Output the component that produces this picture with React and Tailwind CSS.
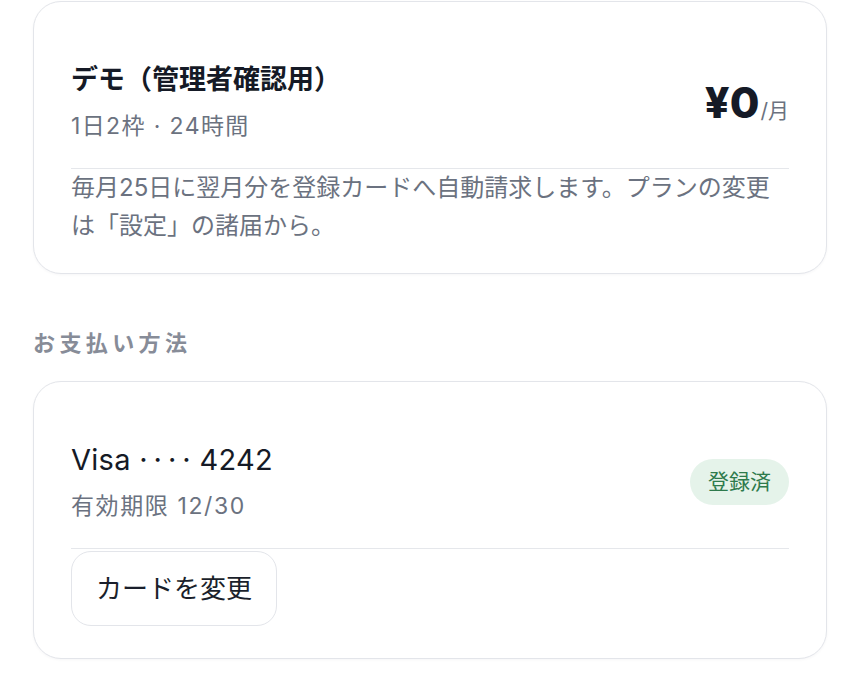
import React from "react";

const font = { fontFamily: 'Inter, "Noto Sans CJK JP", "Noto Sans", sans-serif' };

export default function App() {
  return (
    <div
      className="w-[860px] h-[680px] bg-white px-[33px] pt-px overflow-hidden text-[#111827]"
      style={font}
    >
      {/* Plan card */}
      <div className="rounded-[28px] border border-[#e3e5ea] bg-white px-[37px] pt-[61px] pb-[28px] shadow-[0_1px_3px_rgba(16,24,40,0.04)]">
        <div className="flex items-center justify-between">
          <div className="flex flex-col">
            <div className="text-[27px] leading-[34px] font-bold text-[#151a26]">
              デモ（管理者確認用）
            </div>
            <div className="mt-[14px] text-[23px] leading-[30px] tracking-[0.06em] text-[#6b7280]">
              1日2枠 · 24時間
            </div>
          </div>
          <div className="flex items-baseline">
            <span className="text-[43px] leading-none font-extrabold text-[#151a26]">¥0</span>
            <span className="ml-px text-[21px] leading-none text-[#6b7280]">/月</span>
          </div>
        </div>
        <div className="mt-[27px] h-px bg-[#e5e7eb]" />
        <p className="text-[24px] leading-[38px] text-[#6b7280]">
          毎月25日に翌月分を登録カードへ自動請求します。プランの変更は「設定」の諸届から。
        </p>
      </div>

      {/* Section heading */}
      <div className="mt-[54px] text-[22px] leading-[30px] font-bold tracking-[0.2em] text-[#878c98]">
        お支払い方法
      </div>

      {/* Payment card */}
      <div className="mt-[23px] rounded-[28px] border border-[#e3e5ea] bg-white px-[37px] pt-[60px] pb-[32px] shadow-[0_1px_3px_rgba(16,24,40,0.04)]">
        <div className="flex items-center justify-between">
          <div className="flex flex-col">
            <div className="text-[29px] leading-[36px] tracking-[0.01em] text-[#151a26]">
              Visa <span className="tracking-[6px]">···</span>· 4242
            </div>
            <div className="mt-[13px] text-[23px] leading-[30px] tracking-[0.07em] text-[#6b7280]">
              有効期限 12/30
            </div>
          </div>
          <span className="inline-flex h-[46px] items-center rounded-full bg-[#e5f3ea] px-[18px] text-[21px] text-[#2e7a4c]">
            登録済
          </span>
        </div>
        <div className="mt-[27px] h-px bg-[#e5e7eb]" />
        <button className="mt-[2px] h-[75px] rounded-[20px] border border-[#e3e5ea] bg-white px-[24px] text-[26px] text-[#1a1f2b]">
          カードを変更
        </button>
      </div>
    </div>
  );
}
